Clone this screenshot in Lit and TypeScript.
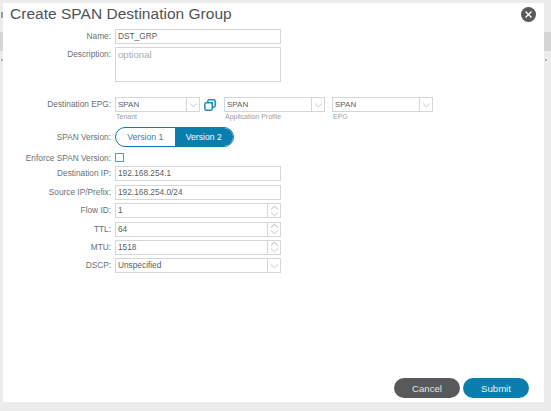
import { LitElement, html, css, svg } from "lit";
import { customElement } from "lit/decorators.js";

const chevDown = svg`<path d="M-3.5 -1.5 L0 1.8 L3.5 -1.5" fill="none" stroke="#c4c8cc" stroke-width="1"/>`;
const chevUp = svg`<path d="M-3.5 1.5 L0 -1.8 L3.5 1.5" fill="none" stroke="#aeb2b6" stroke-width="1"/>`;

@customElement("app-root")
export class AppRoot extends LitElement {
  static styles = css`
    :host {
      display: block;
      width: 551px;
      height: 411px;
      background: #ececec;
      font-family: "Liberation Sans", Arial, sans-serif;
      overflow: hidden;
      position: relative;
    }
    .page-bit { position: absolute; background: #d6d6d6; }
    .bit-l { left: 0; top: 32px; width: 3px; height: 19px; }
    .bit-r { right: 0; top: 32px; width: 7px; height: 19px; }
    .tick-l { left: 1px; top: 59px; width: 2px; height: 2px; background: #a9b4bc; }
    .tick-t { left: 1px; top: 12px; width: 2px; height: 6px; background: #9a9da0; }
    .tick-r { left: 545px; top: 59px; width: 2px; height: 2px; background: #a9b4bc; }
    .dialog {
      position: absolute;
      left: 3px; top: 3px;
      width: 541px; height: 399px;
      background: #fff;
      box-sizing: border-box;
      padding: 0 15px 4px 7px;
      display: flex;
      flex-direction: column;
    }
    .head {
      display: flex;
      justify-content: space-between;
      align-items: center;
      height: 22px;
      margin-bottom: 4px;
    }
    h1 {
      margin: 0;
      font-weight: 400;
      font-size: 15.5px;
      letter-spacing: 0.02px;
      color: #4f5357;
      line-height: 22px;
    }
    .close {
      width: 15px; height: 15px;
      border-radius: 50%;
      background: #58595b;
      display: flex; align-items: center; justify-content: center;
      margin-right: -7px;
      margin-top: 1px;
    }
    .form {
      display: grid;
      grid-template-columns: 101px 1fr;
      column-gap: 4px;
      align-content: start;
      flex: 1;
      font-size: 8.3px;
    }
    label {
      text-align: right;
      color: #6b7074;
      line-height: 15px;
      white-space: nowrap;
    }
    .field {
      box-sizing: border-box;
      border: 1px solid #d4d7d9;
      height: 15px;
      width: 166px;
      display: flex;
      align-items: center;
      color: #5b5f63;
      padding-left: 2px;
      line-height: 13px;
    }
    .row-gap { margin-bottom: 3.4px; }
    .desc { height: 35px; align-items: flex-start; color: #a9adb0; font-size: 9.6px; }
    .epg-row { display: flex; align-items: flex-start; margin-top: 15px; }
    .epg-label { margin-top: 15px; }
    .sel { display: flex; flex-direction: column; }
    .sel .field { width: 85px; font-size: 8px; }
    .sel.wide .field { width: 101px; }
    .sel .cap { font-size: 7px; color: #9ca0a4; padding-left: 1px; line-height: 9px; }
    .arrow {
      margin-left: auto;
      width: 12px;
      align-self: stretch;
      border-left: 1px solid #d4d7d9;
      display: flex; align-items: center; justify-content: center;
      flex: none;
    }
    .arrow svg { display: block; }
    .link { width: 12px; height: 12px; margin: 2px 8px 0 4px; flex: none; }
    .gap { width: 7px; flex: none; }
    .toggle {
      display: flex;
      width: 119px;
      height: 20px;
      box-sizing: border-box;
      border: 1px solid #0a7eae;
      border-radius: 10px;
      overflow: hidden;
      font-size: 8.6px;
      line-height: 18px;
      text-align: center;
      margin: 6px 0;
    }
    .toggle div { flex: 1; color: #1f86b3; }
    .toggle div.on { background: #0a7eae; color: #fff; }
    .ver-label { margin-top: 8.5px; }
    .check {
      width: 9px; height: 9px;
      border: 1px solid #4c9fc4;
      box-sizing: border-box;
      margin: 0 0 4px;
    }
    .chk-label { line-height: 10px; }
    .spin {
      margin-left: auto;
      width: 12px;
      align-self: stretch;
      border-left: 1px solid #d4d7d9;
      flex: none;
      display: flex; flex-direction: column; align-items: center; justify-content: center;
    }
    .footer {
      display: flex;
      justify-content: flex-end;
      gap: 3px;
    }
    .btn {
      width: 66px; height: 20px;
      border-radius: 10px;
      font-size: 9.6px;
      display: flex; align-items: center; justify-content: center;
    }
    .cancel { background: #58595b; color: #e4e4e4; }
    .submit { background: #0a7eae; color: #e8f4f9; }
  `;

  private arrow() {
    return html`<span class="arrow"><svg width="9" height="6" viewBox="-4.5 -3 9 6">${chevDown}</svg></span>`;
  }
  private spin() {
    return html`<span class="spin">
      <svg width="9" height="6" viewBox="-4.5 -3 9 6">${chevUp}</svg>
      <svg width="9" height="6" viewBox="-4.5 -3 9 6">${chevDown}</svg>
    </span>`;
  }
  private sel(v: string, cap: string, wide = false) {
    return html`<div class="sel ${wide ? "wide" : ""}"><div class="field">${v}${this.arrow()}</div><span class="cap">${cap}</span></div>`;
  }

  render() {
    return html`
      <div class="page-bit bit-l"></div>
      <div class="page-bit bit-r"></div>
      <div class="page-bit tick-t"></div>
      <div class="page-bit tick-l"></div>
      <div class="page-bit tick-r"></div>
      <div class="dialog">
        <div class="head">
          <h1>Create SPAN Destination Group</h1>
          <div class="close">
            <svg width="9" height="9" viewBox="0 0 9 9"><path d="M1.5 1.5 L7.5 7.5 M7.5 1.5 L1.5 7.5" stroke="#fff" stroke-width="1.4"/></svg>
          </div>
        </div>
        <div class="form">
          <label>Name:</label><div class="field row-gap">DST_GRP</div>
          <label>Description:</label><div class="field desc">optional</div>
          <label class="epg-label">Destination EPG:</label>
          <div class="epg-row">
            ${this.sel("SPAN", "Tenant")}
            <svg class="link" viewBox="0 0 12 12">
              <rect x="3.8" y="0.8" width="7.4" height="7.4" rx="1.4" fill="#fff" stroke="#1a8cc0" stroke-width="1.5"/>
              <path d="M6 5.8 L8.2 3.6 M6.6 3.4 H8.6 V5.4" fill="none" stroke="#1a8cc0" stroke-width="1"/>
              <rect x="0.8" y="3.8" width="7.4" height="7.4" rx="1.4" fill="#fff" stroke="#1a8cc0" stroke-width="1.5"/>
            </svg>
            ${this.sel("SPAN", "Application Profile", true)}
            <span class="gap"></span>
            ${this.sel("SPAN", "EPG", true)}
          </div>
          <label class="ver-label">SPAN Version:</label>
          <div class="toggle"><div>Version 1</div><div class="on">Version 2</div></div>
          <label class="chk-label">Enforce SPAN Version:</label>
          <div class="check"></div>
          <label>Destination IP:</label><div class="field row-gap">192.168.254.1</div>
          <label>Source IP/Prefix:</label><div class="field row-gap">192.168.254.0/24</div>
          <label>Flow ID:</label><div class="field row-gap">1${this.spin()}</div>
          <label>TTL:</label><div class="field row-gap">64${this.spin()}</div>
          <label>MTU:</label><div class="field row-gap">1518${this.spin()}</div>
          <label>DSCP:</label><div class="field">Unspecified${this.arrow()}</div>
        </div>
        <div class="footer">
          <div class="btn cancel">Cancel</div>
          <div class="btn submit">Submit</div>
        </div>
      </div>
    `;
  }
}
